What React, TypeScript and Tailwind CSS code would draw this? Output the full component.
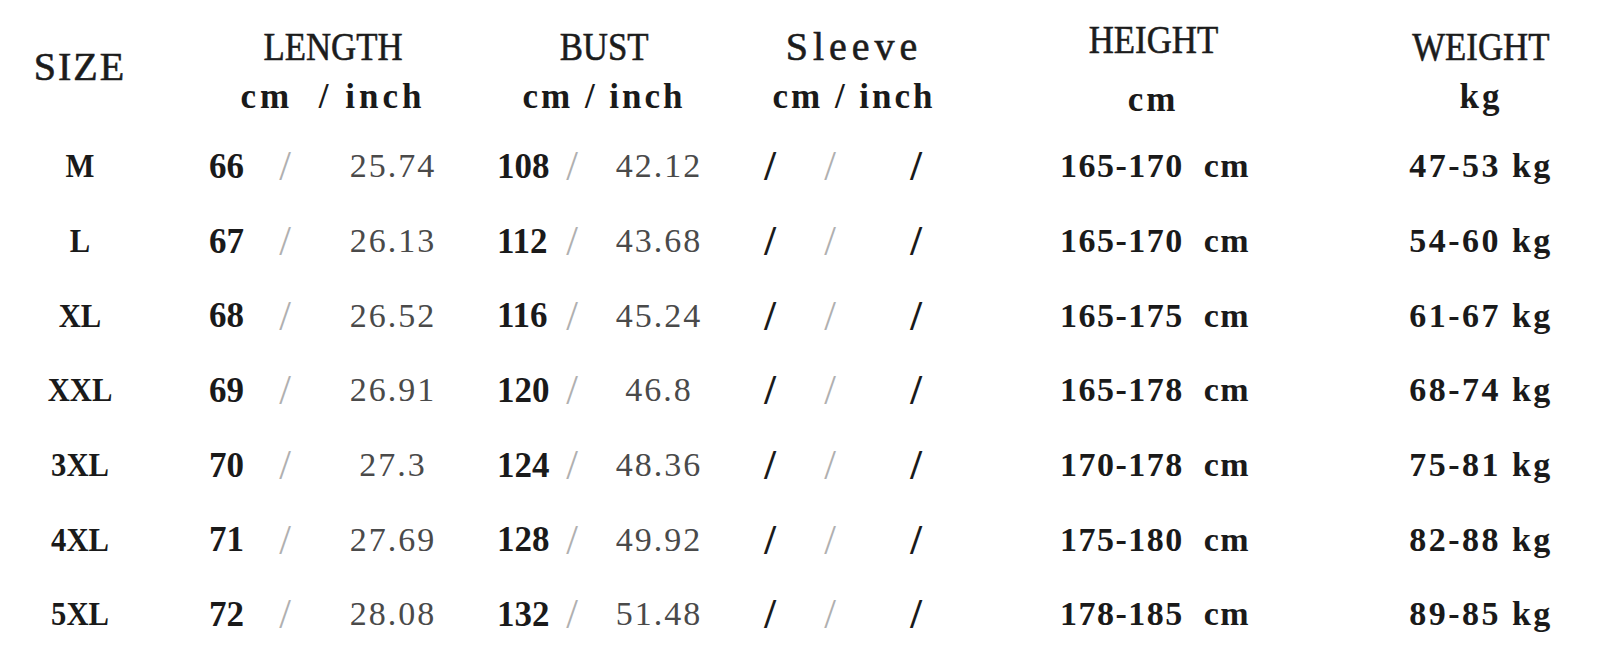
const rows = [
  { size: 'M', len: '66', lenIn: '25.74', bust: '108', bustIn: '42.12', height: '165-170 cm', weight: '47-53 kg' },
  { size: 'L', len: '67', lenIn: '26.13', bust: '112', bustIn: '43.68', height: '165-170 cm', weight: '54-60 kg' },
  { size: 'XL', len: '68', lenIn: '26.52', bust: '116', bustIn: '45.24', height: '165-175 cm', weight: '61-67 kg' },
  { size: 'XXL', len: '69', lenIn: '26.91', bust: '120', bustIn: '46.8', height: '165-178 cm', weight: '68-74 kg' },
  { size: '3XL', len: '70', lenIn: '27.3', bust: '124', bustIn: '48.36', height: '170-178 cm', weight: '75-81 kg' },
  { size: '4XL', len: '71', lenIn: '27.69', bust: '128', bustIn: '49.92', height: '175-180 cm', weight: '82-88 kg' },
  { size: '5XL', len: '72', lenIn: '28.08', bust: '132', bustIn: '51.48', height: '178-185 cm', weight: '89-85 kg' },
];

const serif = "font-['Liberation_Serif',_'Times_New_Roman',_serif]";

function HeadTitle({ children }: { children: string }) {
  return (
    <div className="text-[40px] leading-none text-[#1c1c1c] scale-x-[0.87] whitespace-nowrap [-webkit-text-stroke:0.6px_#1c1c1c]">
      {children}
    </div>
  );
}

function Unit({ children, track = 'tracking-[3px]' }: { children: string; track?: string }) {
  return (
    <div className={`text-[35px] leading-none font-bold text-[#1a1a1a] whitespace-pre ${track}`}>
      {children}
    </div>
  );
}

export default function App() {
  return (
    <div className={`w-[1600px] h-[660px] bg-white overflow-hidden ${serif}`}>
      {/* header */}
      <div className="grid grid-cols-[160px_346px_196px_304px_294px_62px_238px] h-[129px]">
        <div className="flex items-center justify-center pt-[4px]">
          <div className="text-[40px] leading-none text-[#1c1c1c] tracking-[2px] [-webkit-text-stroke:0.6px_#1c1c1c]">SIZE</div>
        </div>
        <div className="flex flex-col items-center pt-[27px] gap-[12px]">
          <HeadTitle>LENGTH</HeadTitle>
          <Unit track="tracking-[4px]">{'cm  / inch'}</Unit>
        </div>
        <div className="flex flex-col items-center pt-[27px] gap-[12px]">
          <HeadTitle>BUST</HeadTitle>
          <Unit>{'cm / inch'}</Unit>
        </div>
        <div className="flex flex-col items-center pt-[27px] gap-[12px]">
          <div className="text-[40px] leading-none text-[#1c1c1c] tracking-[5px] [-webkit-text-stroke:0.6px_#1c1c1c]">Sleeve</div>
          <Unit>{'cm / inch'}</Unit>
        </div>
        <div className="flex flex-col items-center pt-[20px] gap-[22px]">
          <HeadTitle>HEIGHT</HeadTitle>
          <Unit>cm</Unit>
        </div>
        <div />
        <div className="flex flex-col items-center pt-[27px] gap-[12px]">
          <HeadTitle>WEIGHT</HeadTitle>
          <Unit>kg</Unit>
        </div>
      </div>

      {/* rows */}
      {rows.map((r) => (
        <div
          key={r.size}
          className="grid grid-cols-[160px_110px_30px_186px_72px_28px_146px_76px_44px_128px_350px_32px_238px] h-[74.7px] items-center text-[34px] leading-none"
        >
          <div className="text-center font-bold text-[#1a1a1a] scale-x-[0.9]">{r.size}</div>
          <div className="pl-[49px] font-bold text-[#1a1a1a] text-[35px]">{r.len}</div>
          <div className="text-center text-[#b0b0b0] text-[42px]">/</div>
          <div className="text-center text-[#4a4a4a] tracking-[2px]">{r.lenIn}</div>
          <div className="pl-[11px] font-bold text-[#1a1a1a] text-[35px]">{r.bust}</div>
          <div className="text-center text-[#b0b0b0] text-[42px]">/</div>
          <div className="text-center text-[#4a4a4a] tracking-[2px]">{r.bustIn}</div>
          <div className="text-center font-bold text-[#1a1a1a] text-[42px]">/</div>
          <div className="text-center text-[#b0b0b0] text-[42px]">/</div>
          <div className="text-center font-bold text-[#1a1a1a] text-[42px]">/</div>
          <div className="text-center font-bold text-[#1a1a1a] tracking-[1.5px] whitespace-pre">{r.height.replace(' ', '  ')}</div>
          <div />
          <div className="text-center font-bold text-[#1a1a1a] tracking-[2.5px] whitespace-pre">{r.weight}</div>
        </div>
      ))}
    </div>
  );
}
